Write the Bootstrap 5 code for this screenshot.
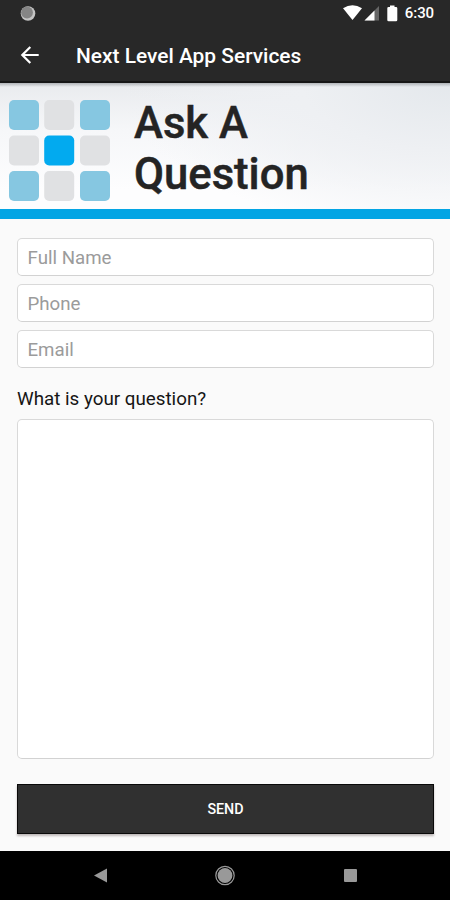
<!DOCTYPE html>
<html lang="en">
<head>
<meta charset="utf-8">
<meta name="viewport" content="width=device-width, initial-scale=1">
<title>Next Level App Services</title>
<link href="https://cdn.jsdelivr.net/npm/bootstrap@5.3.0/dist/css/bootstrap.min.css" rel="stylesheet">
<style>
body{font-family:Roboto,"Liberation Sans",sans-serif;background:#fafafa;height:900px;overflow:hidden}
svg{display:block;flex:none}
.status-bar{height:27px;background:#282828;padding:0 16px 0 20px}
.clock{font-size:15px;font-weight:500;line-height:27px;margin-left:7px;letter-spacing:-.1px}
.app-bar{height:56px;background:#282828;border-bottom:2px solid #161616;padding:2px 0 0 20px}
.app-title{font-size:20.9px;font-weight:500;line-height:54px;margin:2px 0 0 36px}
.hero{height:126px;padding:17px 0 0 9px;background:linear-gradient(180deg,rgba(70,75,80,.35),rgba(70,75,80,0) 4px),radial-gradient(ellipse 330px 150px at 100% 0,#e4e8ec 0,#eef0f3 45%,rgba(250,251,252,0) 100%),linear-gradient(180deg,#e9ebee 0,#f6f7f9 38%,#fdfdfe 85%)}
.hero-title{font-size:43.6px;font-weight:500;-webkit-text-stroke:.5px #242424;line-height:51px;color:#242424;margin:-2px 0 0 24px}
.rule{height:10px;background:#03a5e4}
.ask-form{padding:19px 16px 0 17px}
.ask-form .form-control{border:1px solid #d9d9d9;border-bottom-color:#d2d2d2;border-radius:5px;background:#fff;font-size:18.7px;padding:0 9.5px;color:#222}
.ask-form input.form-control{height:38px;padding-top:1px}
.ask-form .form-control::placeholder{color:#9b9b9b;opacity:1}
.fields{gap:8.2px}
.question-label{font-size:18.8px;line-height:24px;color:#151515;margin:19px 0 8px}
.ask-form textarea.form-control{height:340px;resize:none}
.send{height:50px;margin-top:25px;background:#303030;color:#fff;border:1px solid #090909;font-size:14.3px;font-weight:500;box-shadow:0 2px 2px rgba(80,65,65,.35);padding:0}
.send:hover{background:#303030;color:#fff}
.nav-keys{height:49px;background:#000}
</style>
</head>
<body class="d-flex flex-column">
<div class="status-bar d-flex align-items-center text-white">
  <svg class="me-auto" width="16" height="16" viewBox="0 0 16 16"><circle cx="8" cy="7.500" r="7.300" fill="#c4c4c4"/><circle cx="7" cy="6.500" r="5.900" fill="#858585"/></svg>
  <svg width="56" height="19" viewBox="0 0 56 19">
    <path d="M1 4.300Q10.500 -2 20 4.300L10.500 16Z" fill="#fff"/>
    <path d="M37 2V16.500H22.500Z" fill="#666"/><path d="M32.500 6.500V16.500H22.500Z" fill="#fff"/>
    <path d="M48 3V1.500H52.500V3H54Q55.300 3 55.300 4.300V16Q55.300 17.300 54 17.300H46.600Q45.300 17.300 45.300 16V4.300Q45.300 3 46.600 3Z" fill="#fff"/>
  </svg>
  <span class="clock">6:30</span>
</div>
<header class="app-bar d-flex align-items-center text-white">
  <svg width="20" height="20" viewBox="0 0 20 20" fill="none" stroke="#fff" stroke-width="2.200"><path d="M18.700 10H3M10.300 2L2.300 10L10.300 18"/></svg>
  <span class="app-title">Next Level App Services</span>
</header>
<section class="hero d-flex align-items-start">
  <svg width="101" height="101" viewBox="0 0 101 101">
    <g fill="#86c7e1"><rect width="30" height="30" rx="5"/><rect x="71" width="30" height="30" rx="5"/><rect y="71" width="30" height="30" rx="5"/><rect x="71" y="71" width="30" height="30" rx="5"/></g>
    <g fill="#e0e1e3"><rect x="35.200" width="30" height="30" rx="5"/><rect y="35.500" width="30" height="30" rx="5"/><rect x="71" y="35.500" width="30" height="30" rx="5"/><rect x="35.200" y="71" width="30" height="30" rx="5"/></g>
    <rect x="35.200" y="35.500" width="30" height="30" rx="5" fill="#02aaef"/>
  </svg>
  <h1 class="hero-title">Ask A<br>Question</h1>
</section>
<div class="rule"></div>
<form class="ask-form flex-grow-1">
  <div class="fields d-flex flex-column">
    <input class="form-control" type="text" placeholder="Full Name">
    <input class="form-control" type="tel" placeholder="Phone">
    <input class="form-control" type="email" placeholder="Email">
  </div>
  <label class="question-label d-block" for="question">What is your question?</label>
  <textarea class="form-control d-block" id="question"></textarea>
  <button class="send btn rounded-0 w-100 d-block" type="button">SEND</button>
</form>
<nav class="nav-keys d-flex justify-content-center align-items-center">
  <svg width="266" height="22" viewBox="0 0 266 22" fill="#999"><path d="M2 10.500L15 3.500V17.500Z"/><circle cx="133" cy="10.500" r="7.400"/><circle cx="133" cy="10.500" r="9.200" fill="none" stroke="#999" stroke-width="1.200"/><rect x="252" y="4" width="13" height="13" rx="1"/></svg>
</nav>
<script src="https://cdn.jsdelivr.net/npm/bootstrap@5.3.0/dist/js/bootstrap.bundle.min.js"></script>
</body>
</html>
